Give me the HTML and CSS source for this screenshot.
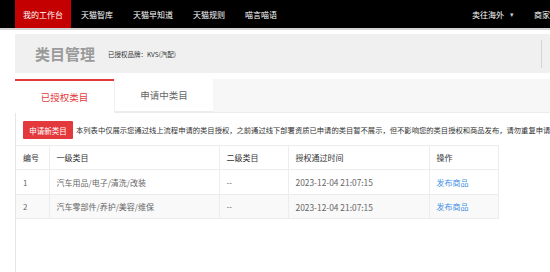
FILE: index.html
```html
<!DOCTYPE html>
<html lang="zh">
<head>
<meta charset="utf-8">
<link rel="stylesheet" href="styles.css">
</head>
<body>
<div class="topbar">
  <a class="nav-item active">我的工作台</a>
  <a class="nav-item">天猫智库</a>
  <a class="nav-item">天猫早知道</a>
  <a class="nav-item">天猫规则</a>
  <a class="nav-item">喵言喵语</a>
  <div class="nav-right">
    <a class="nav-item">卖往海外<span class="caret">▾</span></a>
    <a class="nav-item">商家支持</a>
  </div>
</div>
<div class="page">
  <div class="page-header">
    <h1 class="title">类目管理</h1>
    <span class="brand">已授权品牌：KVS(汽配)</span>
    <span class="divider"></span>
  </div>
  <div class="tabs">
    <div class="tab active">已授权类目</div>
    <div class="tab">申请中类目</div>
  </div>
  <div class="panel">
    <div class="toolbar">
      <button class="btn">申请新类目</button>
      <span class="notice">本列表中仅展示您通过线上流程申请的类目授权，之前通过线下部署资质已申请的类目暂不展示，但不影响您的类目授权和商品发布，请勿重复申请</span>
    </div>
    <table class="grid">
      <colgroup>
        <col class="c1"><col class="c2"><col class="c3"><col class="c4"><col class="c5">
      </colgroup>
      <thead>
        <tr><th>编号</th><th>一级类目</th><th>二级类目</th><th>授权通过时间</th><th>操作</th></tr>
      </thead>
      <tbody>
        <tr><td>1</td><td>汽车用品/电子/清洗/改装</td><td>--</td><td>2023-12-04 21:07:15</td><td><a class="link">发布商品</a></td></tr>
        <tr class="alt"><td>2</td><td>汽车零部件/养护/美容/维保</td><td>--</td><td>2023-12-04 21:07:15</td><td><a class="link">发布商品</a></td></tr>
      </tbody>
    </table>
  </div>
</div>
</body>
</html>
```
FILE: styles.css
```css
* { box-sizing: border-box; }
html, body { margin: 0; padding: 0; }
body {
  width: 550px;
  height: 272px;
  overflow: hidden;
  background: #fff;
  font-family: "Noto Sans CJK SC", "Noto Sans", sans-serif;
  color: #333;
}
.topbar {
  display: flex;
  height: 30px;
  background: #000;
  border-bottom: 2px solid #d4d4d4;
  padding-left: 15px;
  white-space: nowrap;
}
.nav-item {
  display: flex;
  align-items: center;
  padding: 0 10px;
  font-size: 8px;
  color: #fff;
  height: 28px;
  flex-shrink: 0;
}
.nav-item.active {
  background: #c40000;
  padding: 0 8px;
}
.nav-right {
  display: flex;
  flex-shrink: 0;
  margin-left: 175px;
}
.caret { font-size: 7px; margin-left: 6px; color: #ccc; }
.page {
  padding: 4px 0 0 15px;
}
.page-header {
  display: flex;
  align-items: center;
  height: 39px;
  background: #f0f0f0;
  padding-left: 20px;
}
.title {
  margin: 0;
  font-size: 15px;
  font-weight: 700;
  color: #9a9a9a;
}
.brand {
  margin-left: 13px;
  font-size: 6.5px;
  color: #333;
}
.divider {
  margin-left: auto;
  margin-right: 8px;
  width: 1px;
  height: 28px;
  background: #d4d4d4;
}
.tabs {
  display: flex;
  margin-top: 6px;
  height: 34px;
  background: #f7f7f7;
  border-bottom: 1px solid #ececec;
}
.tab {
  width: 99px;
  display: flex;
  align-items: center;
  justify-content: center;
  font-size: 9.5px;
  color: #666;
  background: #fff;
  border-left: 1px solid #f0f0f0;
  border-bottom: 1px solid #ececec;
}
.tab.active {
  color: #e4393c;
  border-top: 2px solid #e4393c;
  border-left: none;
  border-bottom-color: #fff;
  height: 34px;
}
.panel {
  border-left: 1px solid #e6e6e6;
  min-height: 160px;
}
.toolbar {
  display: flex;
  align-items: center;
  padding: 8px 0 6px 7px;
  white-space: nowrap;
}
.btn {
  flex-shrink: 0;
  border: none;
  background: #e4393c;
  color: #fff;
  font-family: inherit;
  font-size: 7.5px;
  height: 18px;
  width: 50px;
  padding: 0;
  border-radius: 1px;
}
.notice {
  flex-shrink: 0;
  margin-left: 3px;
  font-size: 7.3px;
  color: #333;
}
.grid {
  border-collapse: collapse;
  table-layout: fixed;
  width: 482px;
  font-size: 8px;
  color: #555;
}
.c1 { width: 33px; }
.c2 { width: 170px; }
.c3 { width: 69px; }
.c4 { width: 141px; }
.c5 { width: 69px; }
.grid th, .grid td {
  text-align: left;
  font-weight: 400;
  padding: 0 0 0 7px;
  border: 1px solid #ededed;
  white-space: nowrap;
}
.grid tr > :first-child { border-left: none; }
.grid th { height: 24px; color: #333; }
.grid td { height: 25px; color: #666; }
.grid td:nth-child(4) { font-size: 8.4px; }
.grid tr.alt td { background: #f9f9f9; height: 24px; }
.link { color: #3e8fe3; }
```
